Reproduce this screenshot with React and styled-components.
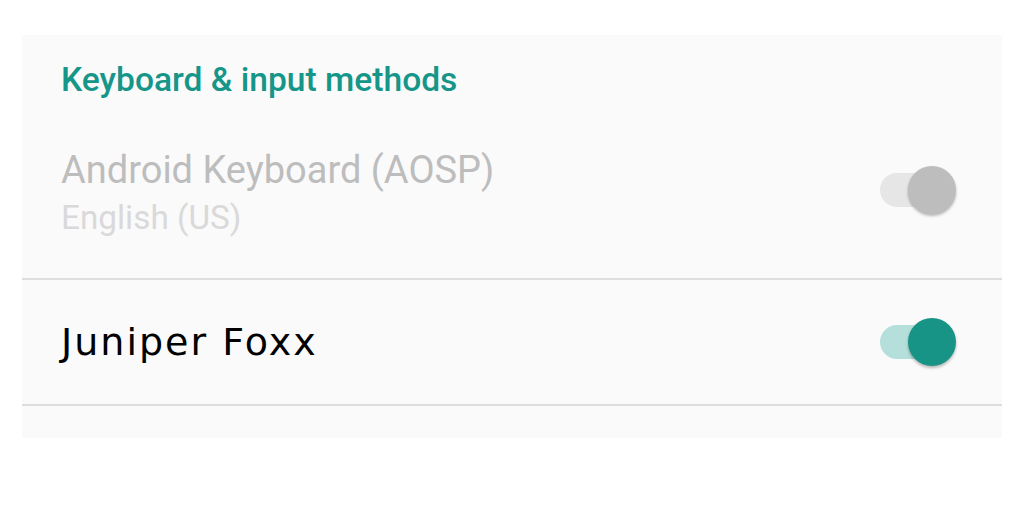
import React from 'react';
import styled, {createGlobalStyle} from "styled-components"

const Global = createGlobalStyle`
    body {
        margin: 0;
        background: #ffffff;
        font-family: Roboto, "Liberation Sans", sans-serif;
    }
`

const Panel = styled.div`
    margin: 35px 22px 0;
    width: 980px;
    height: 403px;
    background-color: #fafafa;
    display: flex;
    flex-direction: column;
`

const Header = styled.div`
    padding: 25px 39px 0;
    font-size: 33.6px;
    line-height: 40px;
    font-weight: 500;
    color: #159688;
`

const Row = styled.div`
    display: flex;
    align-items: center;
    justify-content: space-between;
    padding: ${p => p.pad};
    border-bottom: 2px solid #dedede;
`

const TextCol = styled.div`
    display: flex;
    flex-direction: column;
`

const Title = styled.div`
    font-size: 38px;
    line-height: 44px;
    color: #bdbdbd;
`

const Summary = styled.div`
    margin-top: 6px;
    font-size: 33.3px;
    line-height: 40px;
    color: #d9d9d9;
`

const BrandTitle = styled.div`
    font-family: "DejaVu Sans", Lato, sans-serif;
    font-size: 38px;
    line-height: 47px;
    letter-spacing: 2px;
    color: #000000;
`

const Switch = styled.div`
    position: relative;
    width: 76px;
    height: 48px;
    margin-top: ${p => p.shift || 0}px;
`

const Track = styled.div`
    position: absolute;
    left: 0;
    top: 7px;
    width: 70px;
    height: 34px;
    border-radius: 17px;
    background-color: ${p => p.on ? "#b4dfdb" : "#e6e6e6"};
`

const Thumb = styled.div`
    position: absolute;
    left: 28px;
    top: 0;
    width: 48px;
    height: 48px;
    border-radius: 50%;
    background-color: ${p => p.on ? "#179486" : "#bdbdbd"};
    box-shadow: 0 2px 3px rgba(0, 0, 0, 0.28);
`

const Toggle = ({on, shift}) => (
    <Switch shift={shift}>
        <Track on={on ? 1 : 0} />
        <Thumb on={on ? 1 : 0} />
    </Switch>
)

const App = () => {
    return (
        <>
            <Global />
            <Panel>
                <Header>Keyboard &amp; input methods</Header>
                <Row pad="48px 46px 40px 39px">
                    <TextCol>
                        <Title>Android Keyboard (AOSP)</Title>
                        <Summary>English (US)</Summary>
                    </TextCol>
                    <Toggle shift={-6} />
                </Row>
                <Row pad="38px 46px 38px 39px">
                    <BrandTitle>Juniper Foxx</BrandTitle>
                    <Toggle on />
                </Row>
            </Panel>
        </>
    );
};

export default App;
